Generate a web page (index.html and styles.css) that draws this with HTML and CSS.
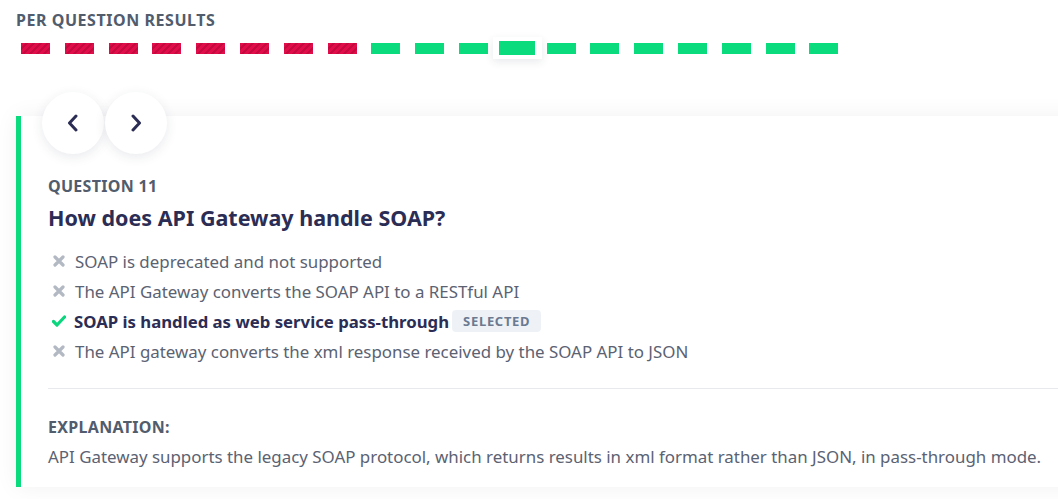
FILE: index.html
```html
<!DOCTYPE html>
<html lang="en">
<head>
<meta charset="utf-8">
<title>Per question results</title>
<link rel="stylesheet" href="styles.css">
</head>
<body>
<section class="results">
  <h2 class="results-title">PER QUESTION RESULTS</h2>
  <div class="bars">
    <span class="bar bar-wrong"></span>
    <span class="bar bar-wrong"></span>
    <span class="bar bar-wrong"></span>
    <span class="bar bar-wrong"></span>
    <span class="bar bar-wrong"></span>
    <span class="bar bar-wrong"></span>
    <span class="bar bar-wrong"></span>
    <span class="bar bar-wrong"></span>
    <span class="bar bar-right"></span>
    <span class="bar bar-right"></span>
    <span class="bar bar-right"></span>
    <span class="bar-current"><span class="bar bar-right bar-big"></span></span>
    <span class="bar bar-right"></span>
    <span class="bar bar-right"></span>
    <span class="bar bar-right"></span>
    <span class="bar bar-right"></span>
    <span class="bar bar-right"></span>
    <span class="bar bar-right"></span>
    <span class="bar bar-right"></span>
  </div>
</section>

<section class="card">
  <div class="nav">
    <button class="nav-btn" aria-label="Previous">
      <svg width="14" height="18" viewBox="0 0 14 18"><path d="M10 2 L3.5 9 L10 16" fill="none" stroke="#2b2d55" stroke-width="3" stroke-linecap="round" stroke-linejoin="round"/></svg>
    </button>
    <button class="nav-btn" aria-label="Next">
      <svg width="14" height="18" viewBox="0 0 14 18"><path d="M4 2 L10.5 9 L4 16" fill="none" stroke="#2b2d55" stroke-width="3" stroke-linecap="round" stroke-linejoin="round"/></svg>
    </button>
  </div>

  <div class="q-label">QUESTION 11</div>
  <h3 class="q-title">How does API Gateway handle SOAP?</h3>
  <ul class="options">
    <li class="option">
      <svg class="icon" width="12" height="12" viewBox="0 0 12 12"><path d="M2 2 L10 10 M10 2 L2 10" stroke="#b3b9c3" stroke-width="3.2" stroke-linecap="round"/></svg>
      <span>SOAP is deprecated and not supported</span>
    </li>
    <li class="option">
      <svg class="icon" width="12" height="12" viewBox="0 0 12 12"><path d="M2 2 L10 10 M10 2 L2 10" stroke="#b3b9c3" stroke-width="3.2" stroke-linecap="round"/></svg>
      <span>The API Gateway converts the SOAP API to a RESTful API</span>
    </li>
    <li class="option option-selected">
      <svg class="icon" width="14" height="12" viewBox="0 0 14 12"><path d="M1.5 6.5 L5 10 L12.5 2" fill="none" stroke="#0bd67e" stroke-width="3.2" stroke-linecap="round" stroke-linejoin="round"/></svg>
      <span>SOAP is handled as web service pass-through</span>
      <span class="badge">SELECTED</span>
    </li>
    <li class="option">
      <svg class="icon" width="12" height="12" viewBox="0 0 12 12"><path d="M2 2 L10 10 M10 2 L2 10" stroke="#b3b9c3" stroke-width="3.2" stroke-linecap="round"/></svg>
      <span>The API gateway converts the xml response received by the SOAP API to JSON</span>
    </li>
  </ul>
  <hr class="divider">
  <div class="exp-label">EXPLANATION:</div>
  <p class="exp-text">API Gateway supports the legacy SOAP protocol, which returns results in xml format rather than JSON, in pass-through mode.</p>
</section>
</body>
</html>
```

FILE: styles.css
```css
html, body {
  margin: 0;
  padding: 0;
  background: #ffffff;
  overflow: hidden;
}
body {
  font-family: "Noto Sans", "Open Sans", sans-serif;
  color: #5b6272;
  width: 1058px;
  height: 499px;
}

.results {
  padding: 10px 16px 0 16px;
}
.results-title {
  margin: 0;
  font-size: 16px;
  line-height: 20px;
  font-weight: 700;
  letter-spacing: 0.55px;
  color: #515c6d;
}
.bars {
  display: flex;
  align-items: center;
  gap: 14.8px;
  padding-left: 5px;
  margin-top: 7px;
  height: 22px;
}
.bar {
  display: block;
  width: 29px;
  height: 11px;
  flex: none;
}
.bar-wrong {
  background: repeating-linear-gradient(135deg, #e10c4a 0 3px, #c60a40 3px 5px);
}
.bar-right {
  background: #0adc7e;
}
.bar-current {
  display: flex;
  align-items: center;
  justify-content: center;
  width: 49px;
  height: 22px;
  margin: 0 -10px;
  background: #fff;
  box-shadow: 0 3px 8px rgba(40, 45, 80, 0.10);
  flex: none;
}
.bar-big {
  width: 36px;
  height: 14px;
}

.card {
  position: relative;
  margin: 57px -40px 0 16px;
  background: #fff;
  border-left: 5px solid #0adc7e;
  box-shadow: 0 0 22px rgba(30, 35, 60, 0.06);
  padding: 60px 0 18px 27px;
}
.nav {
  position: absolute;
  top: -24px;
  left: 21px;
  display: flex;
  gap: 1px;
}
.nav-btn {
  width: 62px;
  height: 62px;
  border-radius: 50%;
  border: none;
  background: #fff;
  box-shadow: 0 3px 12px rgba(40, 45, 80, 0.10);
  display: flex;
  align-items: center;
  justify-content: center;
  padding: 0;
  cursor: pointer;
}

.q-label {
  font-size: 16px;
  line-height: 20px;
  font-weight: 700;
  letter-spacing: 0.3px;
  color: #515c6d;
}
.q-title {
  margin: 8px 0 0 0;
  font-size: 21.5px;
  line-height: 28px;
  font-weight: 700;
  color: #2b2d55;
}
.options {
  list-style: none;
  margin: 14px 0 0 0;
  padding: 0;
}
.option {
  display: flex;
  align-items: center;
  height: 30px;
  font-size: 16.9px;
  color: #5b6272;
}
.icon {
  flex: none;
  margin: 0 10px 0 5px;
}
.option-selected .icon {
  margin-left: 4px;
  margin-right: 8px;
}
.option-selected {
  font-weight: 700;
  font-size: 16.75px;
  color: #2b2d55;
}
.badge {
  margin-left: 3px;
  padding: 0 11px;
  height: 22px;
  line-height: 22px;
  font-size: 13px;
  font-weight: 700;
  letter-spacing: 0.7px;
  color: #6b7a90;
  background: #eef2f7;
  border-radius: 4px;
}
.divider {
  margin: 22px 0 0 0;
  border: none;
  border-top: 1px solid #e8e9ec;
  height: 0;
}
.exp-label {
  margin-top: 28px;
  font-size: 16px;
  line-height: 20px;
  font-weight: 700;
  letter-spacing: 0.3px;
  color: #515c6d;
}
.exp-text {
  margin: 8px 0 0 0;
  font-size: 16.9px;
  line-height: 24px;
  color: #5b6272;
}
```
